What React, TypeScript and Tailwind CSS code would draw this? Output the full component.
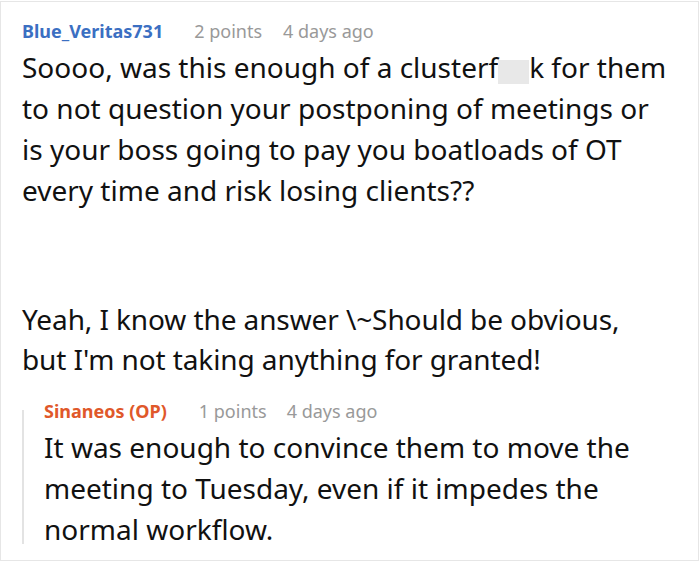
export default function App() {
  return (
    <div className="w-[700px] h-[562px] bg-white overflow-hidden" style={{ fontFamily: '"Noto Sans", sans-serif' }}>
      <div className="mt-[1px] w-[699px] h-[560px] border border-[#e6e6e6] pl-[21px] pt-[14px]">
        <div className="flex items-baseline text-[18px] leading-[31px]">
          <span className="font-bold text-[#3b6fc2]">Blue_Veritas731</span>
          <span className="ml-[31px] text-[#999999]">2 points</span>
          <span className="ml-[21px] text-[#999999]">4 days ago</span>
        </div>
        <p className="w-[650px] text-[28px] leading-[41px] text-[#111111]">
          Soooo, was this enough of a clusterf
          <span className="inline-block w-[31px] h-[24px] bg-[#e8e8e8] align-[-6px]" />
          k for them to not question your postponing of meetings or is your boss going to pay you boatloads of OT every time and risk losing clients??
        </p>
        <p className="mt-[88px] text-[28px] leading-[40px] text-[#111111] tracking-[-0.1px]">
          Yeah, I know the answer \~Should be obvious,
          <br />
          but I'm not taking anything for granted!
        </p>
        <div className="mt-[17px] flex">
          <div className="w-[2px] mt-[14px] mb-[6px] bg-[#e3e3e3] shrink-0" />
          <div className="ml-[20px]">
            <div className="flex items-baseline text-[18px] leading-[31px]">
              <span className="font-bold text-[#e0582a]">Sinaneos (OP)</span>
              <span className="ml-[32px] text-[#999999]">1 points</span>
              <span className="ml-[20px] text-[#999999]">4 days ago</span>
            </div>
            <p className="w-[620px] text-[28px] leading-[41px] text-[#111111]">
              It was enough to convince them to move the meeting to Tuesday, even if it impedes the normal workflow.
            </p>
          </div>
        </div>
      </div>
    </div>
  );
}
